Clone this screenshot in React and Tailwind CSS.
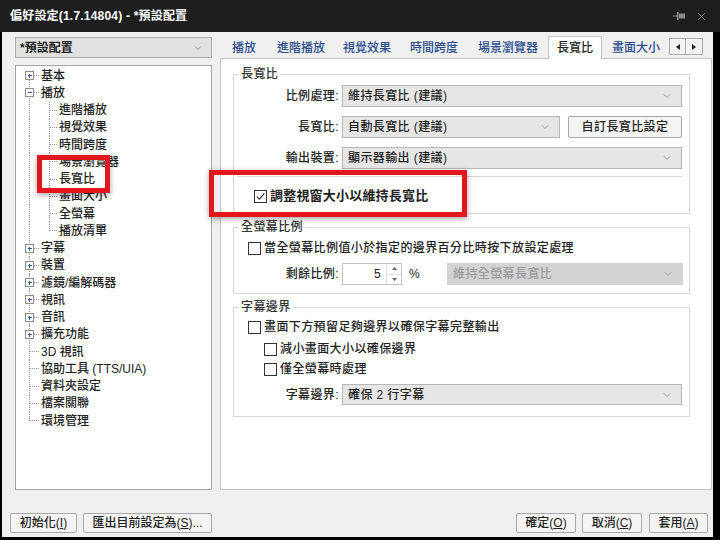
import React from 'react';
import { ChevronDown, X } from 'lucide-react';

const treeItems = [
  { t: '基本', lvl: 0, box: '+' },
  { t: '播放', lvl: 0, box: '-' },
  { t: '進階播放', lvl: 1 },
  { t: '視覺效果', lvl: 1 },
  { t: '時間跨度', lvl: 1 },
  { t: '場景瀏覽器', lvl: 1 },
  { t: '長寬比', lvl: 1 },
  { t: '畫面大小', lvl: 1 },
  { t: '全螢幕', lvl: 1 },
  { t: '播放清單', lvl: 1, last: true },
  { t: '字幕', lvl: 0, box: '+' },
  { t: '裝置', lvl: 0, box: '+' },
  { t: '濾鏡/編解碼器', lvl: 0, box: '+' },
  { t: '視訊', lvl: 0, box: '+' },
  { t: '音訊', lvl: 0, box: '+' },
  { t: '擴充功能', lvl: 0, box: '+' },
  { t: '3D 視訊', lvl: 0 },
  { t: '協助工具 (TTS/UIA)', lvl: 0 },
  { t: '資料夾設定', lvl: 0 },
  { t: '檔案關聯', lvl: 0 },
  { t: '環境管理', lvl: 0, last: true },
];

const tabs = [
  { t: '播放', cls: 'ml-[12px]' },
  { t: '進階播放', cls: 'ml-[21px]' },
  { t: '視覺效果', cls: 'ml-[18px]' },
  { t: '時間跨度', cls: 'ml-[19px]' },
  { t: '場景瀏覽器', cls: 'ml-[20px]' },
];

const TreeRow = ({ item, first }) => {
  const mid = 8.5;
  const h = 17.25;
  const w = item.lvl === 0 ? 25 : 43;
  const dot = { stroke: '#9a9a9a', strokeWidth: 1, strokeDasharray: '1 1' };
  return (
    <div className="flex items-center h-[17.25px]">
      <svg width={w} height={h} className="shrink-0" shapeRendering="crispEdges">
        {item.lvl === 0 ? (
          <>
            <line x1="13.5" y1={first ? mid : 0} x2="13.5" y2={item.last ? mid : h} {...dot} />
            <line x1={item.box ? 18 : 13.5} y1={mid} x2="23" y2={mid} {...dot} />
            {item.box && (
              <>
                <rect x="9.5" y={mid - 4} width="8" height="8" fill="#fff" stroke="#8c8c8c" />
                <line x1="11.5" y1={mid} x2="16" y2={mid} stroke="#3d5b9a" />
                {item.box === '+' && <line x1="13.5" y1={mid - 2} x2="13.5" y2={mid + 2.5} stroke="#3d5b9a" />}
              </>
            )}
          </>
        ) : (
          <>
            <line x1="13.5" y1="0" x2="13.5" y2={h} {...dot} />
            <line x1="33.5" y1="0" x2="33.5" y2={item.last ? mid : h} {...dot} />
            <line x1="33.5" y1={mid} x2="41" y2={mid} {...dot} />
          </>
        )}
      </svg>
      <span className="whitespace-nowrap leading-none">{item.t}</span>
    </div>
  );
};

const Select = ({ text, cls, disabled }) => (
  <div
    className={`h-full flex items-center pl-[5px] pr-[8px] border ${cls} ${
      disabled ? 'bg-[#d3d3d3] border-[#d3d3d3] text-[#9c9c9c]' : 'bg-[#e6e6e6] border-[#b8b8b8] text-[#222]'
    }`}
  >
    <span className="whitespace-nowrap">{text}</span>
    <ChevronDown size={12} strokeWidth={1.3} className="ml-auto text-[#7a7a7a]" />
  </div>
);

const Checkbox = ({ checked }) => (
  <span className="w-[13px] h-[13px] border border-[#333] bg-white flex items-center justify-center shrink-0">
    {checked && (
      <svg width="11" height="11" viewBox="0 0 11 11">
        <path d="M1.8 5.6l2.6 2.6L9.4 2.4" fill="none" stroke="#333" strokeWidth="1.1" />
      </svg>
    )}
  </span>
);

const Button = ({ children, cls }) => (
  <div className={`h-[20px] flex items-center justify-center border border-[#a9a9a9] bg-[#f4f4f4] rounded-[2px] text-[#222] whitespace-nowrap ${cls}`}>
    {children}
  </div>
);

const Group = ({ title, children, cls }) => (
  <fieldset className={`w-[457px] border border-[#d9d9d9] ${cls}`}>
    <legend className="ml-[5px] px-[2px] leading-[14px] text-[#333]">{title}</legend>
    {children}
  </fieldset>
);

const App = () => {
  return (
    <div className="relative w-[720px] h-[540px] bg-black overflow-hidden flex flex-col font-['Liberation_Sans','Noto_Sans_CJK_TC',sans-serif] font-medium text-[12px] text-[#222]">
      {/* Title bar */}
      <div className="h-[32px] shrink-0 bg-[#1e1e1e] flex items-center pl-[10px] pr-[12px]">
        <span className="text-white font-bold text-[12px] tracking-[0.2px]">偏好設定(1.7.14804) - *預設配置</span>
        <div className="ml-auto flex items-center gap-[9px] text-[#8a8a8a]">
          <svg width="13" height="10" viewBox="0 0 13 10">
            <line x1="0" y1="5" x2="4" y2="5" stroke="#8a8a8a" strokeWidth="1.2" />
            <rect x="4" y="1" width="1.6" height="8" fill="#8a8a8a" />
            <rect x="6" y="2.5" width="6" height="5" fill="#8a8a8a" />
          </svg>
          <X size={13} strokeWidth={1.4} />
        </div>
      </div>

      {/* Body */}
      <div className="ml-[2px] w-[711px] h-[505px] bg-[#f0f0f0] flex flex-col">
        <div className="flex pt-[5px] pl-[13px] h-[458px]">
          {/* Left column */}
          <div className="w-[197px] flex flex-col">
            <div className="h-[21px] flex items-center border border-[#adadad] bg-[#e1e1e1] pl-[4px] pr-[7px]">
              <span className="font-bold">*預設配置</span>
              <ChevronDown size={12} strokeWidth={1.3} className="ml-auto text-[#7a7a7a]" />
            </div>
            <div className="mt-[7px] h-[425px] border border-[#a6a6a6] bg-white pt-[1px]">
              {treeItems.map((item, i) => (
                <TreeRow key={item.t} item={item} first={i === 0} />
              ))}
            </div>
          </div>

          {/* Right column */}
          <div className="ml-[8px] w-[492px] flex flex-col">
            <div className="h-[21px] flex items-end relative z-10">
              {tabs.map((tab) => (
                <div key={tab.t} className={`h-[21px] flex items-center text-[#2b4c8c] whitespace-nowrap ${tab.cls}`}>
                  {tab.t}
                </div>
              ))}
              <div className="ml-[10px] w-[54px] h-[23px] -mb-[1px] bg-white border border-b-0 border-[#c4c4c4] flex items-center justify-center text-[#222]">
                長寬比
              </div>
              <div className="ml-[10px] h-[21px] flex items-center text-[#2b4c8c] whitespace-nowrap">畫面大小</div>
              <div className="ml-[9px] mb-[3px] flex">
                <div className="w-[17px] h-[17px] border border-[#adadad] bg-[#f2f2f2] flex items-center justify-center">
                  <svg width="4" height="6" viewBox="0 0 4 6"><path d="M4 0L0 3l4 3z" fill="#222" /></svg>
                </div>
                <div className="w-[17px] h-[17px] border border-l-0 border-[#adadad] bg-[#f2f2f2] flex items-center justify-center">
                  <svg width="4" height="6" viewBox="0 0 4 6"><path d="M0 0l4 3-4 3z" fill="#222" /></svg>
                </div>
              </div>
            </div>

            <div className="h-[432px] border border-[#c4c4c4] bg-white pl-[12px] pt-[8px] tracking-[0.4px]">
              {/* 長寬比 */}
              <Group title="長寬比" cls="pt-[4px] pb-[9px]">
                <div className="flex items-center h-[22px]">
                  <span className="w-[105px] text-right whitespace-nowrap">比例處理:</span>
                  <Select text="維持長寬比 (建議)" cls="ml-[3px] w-[340px]" />
                </div>
                <div className="flex items-center h-[22px] mt-[9px]">
                  <span className="w-[105px] text-right whitespace-nowrap">長寬比:</span>
                  <Select text="自動長寬比 (建議)" cls="ml-[3px] w-[218px]" />
                  <Button cls="ml-[8px] w-[114px] h-[22px]">自訂長寬比設定</Button>
                </div>
                <div className="flex items-center h-[22px] mt-[9px]">
                  <span className="w-[105px] text-right whitespace-nowrap">輸出裝置:</span>
                  <Select text="顯示器輸出 (建議)" cls="ml-[3px] w-[340px]" />
                </div>
                <div className="mt-[7px] ml-[3px] w-[445px] h-px bg-[#d5d5d5]" />
                <div className="mt-[11px] h-[16px] flex items-center pl-[20px] gap-[3px]">
                  <Checkbox checked />
                  <span className="font-bold text-[13px] tracking-[0.2px] whitespace-nowrap">調整視窗大小以維持長寬比</span>
                </div>
              </Group>

              {/* 全螢幕比例 */}
              <Group title="全螢幕比例" cls="mt-[6px] pt-[7px] pb-[8px]">
                <div className="h-[14px] flex items-center pl-[14px] gap-[3px]">
                  <Checkbox />
                  <span className="whitespace-nowrap">當全螢幕比例值小於指定的邊界百分比時按下放設定處理</span>
                </div>
                <div className="mt-[8px] h-[22px] flex items-center">
                  <span className="w-[105px] text-right whitespace-nowrap">剩餘比例:</span>
                  <div className="ml-[3px] w-[60px] h-full border border-[#c2c2c2] bg-white flex">
                    <span className="flex-1 flex items-center justify-end pr-[5px]">5</span>
                    <div className="w-[15px] flex flex-col border-l border-[#e0e0e0]">
                      <div className="flex-1 flex items-center justify-center border-b border-[#e0e0e0]">
                        <svg width="5" height="3" viewBox="0 0 5 3"><path d="M0 3L2.5 0 5 3z" fill="#666" /></svg>
                      </div>
                      <div className="flex-1 flex items-center justify-center">
                        <svg width="5" height="3" viewBox="0 0 5 3"><path d="M0 0l2.5 3L5 0z" fill="#666" /></svg>
                      </div>
                    </div>
                  </div>
                  <span className="w-[45px] pl-[7px]">%</span>
                  <Select text="維持全螢幕長寬比" cls="w-[236px]" disabled />
                </div>
              </Group>

              {/* 字幕邊界 */}
              <Group title="字幕邊界" cls="mt-[6px] pt-[6px] pb-[11px]">
                <div className="h-[14px] flex items-center pl-[14px] gap-[3px]">
                  <Checkbox />
                  <span className="whitespace-nowrap">畫面下方預留足夠邊界以確保字幕完整輸出</span>
                </div>
                <div className="mt-[8px] h-[14px] flex items-center pl-[30px] gap-[3px]">
                  <Checkbox />
                  <span className="whitespace-nowrap">減小畫面大小以確保邊界</span>
                </div>
                <div className="mt-[6px] h-[14px] flex items-center pl-[30px] gap-[3px]">
                  <Checkbox />
                  <span className="whitespace-nowrap">僅全螢幕時處理</span>
                </div>
                <div className="mt-[8px] h-[21px] flex items-center">
                  <span className="w-[105px] text-right whitespace-nowrap">字幕邊界:</span>
                  <Select text="確保 2 行字幕" cls="ml-[3px] w-[340px]" />
                </div>
              </Group>
            </div>
          </div>
        </div>

        {/* Bottom buttons */}
        <div className="flex pt-[23px] pl-[8px] pr-[5px]">
          <Button cls="w-[67px]">初始化(<span className="underline">I</span>)</Button>
          <Button cls="ml-[6px] w-[129px]">匯出目前設定為(<span className="underline">S</span>)...</Button>
          <Button cls="ml-auto w-[60px]">確定(<span className="underline">O</span>)</Button>
          <Button cls="ml-[6px] w-[60px]">取消(<span className="underline">C</span>)</Button>
          <Button cls="ml-[7px] w-[59px]">套用(<span className="underline">A</span>)</Button>
        </div>
      </div>

      {/* Red highlight annotations */}
      <div className="absolute left-[37px] top-[155px] w-[73px] h-[38px] border-[5px] border-[#e3161c] shadow-[0_2px_6px_rgba(0,0,0,0.35)]" />
      <div className="absolute left-[209px] top-[170px] w-[258px] h-[47px] border-[5px] border-[#e3161c] shadow-[0_2px_6px_rgba(0,0,0,0.35)]" />
    </div>
  );
};

export default App;
